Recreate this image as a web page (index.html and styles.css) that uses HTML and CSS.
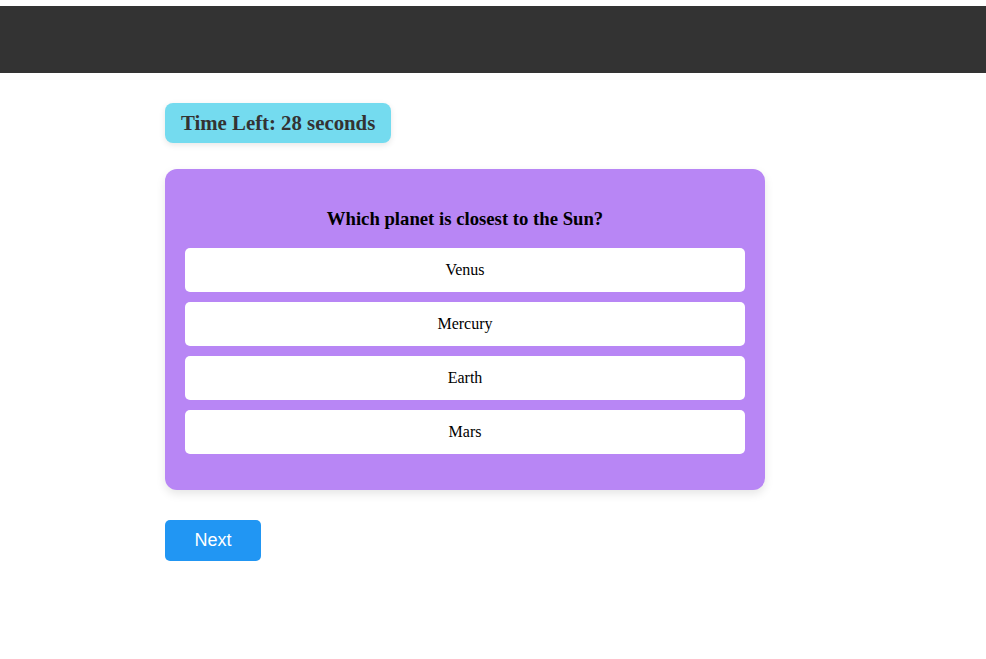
FILE: index.html
```html
<!DOCTYPE html>
<html>
<head>
<meta charset="utf-8">
<link rel="stylesheet" href="styles.css">
</head>
<body>
<header class="topbar"></header>
<main class="container">
  <div class="timer">Time Left: 28 seconds</div>
  <section class="card">
    <h3 class="question">Which planet is closest to the Sun?</h3>
    <div class="options">
      <button class="option">Venus</button>
      <button class="option">Mercury</button>
      <button class="option">Earth</button>
      <button class="option">Mars</button>
    </div>
  </section>
  <button class="next">Next</button>
</main>
</body>
</html>
```

FILE: styles.css
```css
html, body {
  margin: 0;
  padding: 0;
  background: #fff;
  font-family: "Liberation Serif", "Times New Roman", serif;
}
.topbar {
  margin-top: 6px;
  height: 67px;
  background: #333333;
}
.container {
  width: 600px;
  margin-left: 165px;
  padding-top: 30px;
  display: flex;
  flex-direction: column;
  align-items: flex-start;
}
.timer {
  background: #74dbef;
  color: #333;
  font-weight: bold;
  font-size: 20.8px;
  line-height: 24px;
  padding: 8px 16px;
  border-radius: 8px;
  box-shadow: 0 2px 6px rgba(0,0,0,0.1);
}
.card {
  margin-top: 26px;
  align-self: stretch;
  background: #b886f5;
  border-radius: 12px;
  padding: 20px 20px 36px;
  box-shadow: 0 4px 10px rgba(0,0,0,0.1);
}
.question {
  margin: 18.7px 0;
  text-align: center;
  font-size: 18.72px;
  color: #000;
}
.options {
  display: flex;
  flex-direction: column;
  gap: 10px;
}
.option {
  height: 44px;
  background: #fff;
  border: none;
  border-radius: 5px;
  font-family: "Liberation Serif", "Times New Roman", serif;
  font-size: 16px;
  color: #000;
}
.next {
  margin-top: 30px;
  width: 96px;
  height: 41px;
  background: #2196f3;
  color: #fff;
  border: none;
  border-radius: 5px;
  font-family: "Liberation Sans", Arial, sans-serif;
  font-size: 18px;
}
```
